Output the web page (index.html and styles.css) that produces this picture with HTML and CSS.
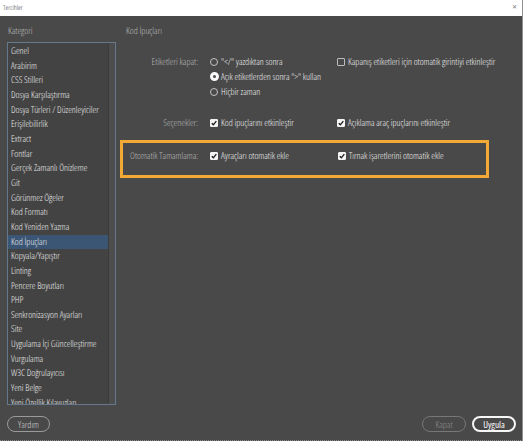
FILE: index.html
```html
<!DOCTYPE html>
<html>

<head>
  <meta charset="UTF-8">
  <title>Tercihler</title>
  <link rel="stylesheet" href="styles.css">
</head>

<body>
  <div id="window">

    <div class="titlebar">
      <span class="title">Tercihler</span>
      <span class="close">✕</span>
    </div>

    <div class="content">
      <div class="sidebar">
        <div class="heading">Kategori</div>
        <div class="list">
          <ul class="items">
            <li>Genel</li>
            <li>Arabirim</li>
            <li>CSS Stilleri</li>
            <li>Dosya Karşılaştırma</li>
            <li>Dosya Türleri / Düzenleyiciler</li>
            <li>Erişilebilirlik</li>
            <li>Extract</li>
            <li>Fontlar</li>
            <li>Gerçek Zamanlı Önizleme</li>
            <li>Git</li>
            <li>Görünmez Öğeler</li>
            <li>Kod Formatı</li>
            <li>Kod Yeniden Yazma</li>
            <li class="selected">Kod İpuçları</li>
            <li>Kopyala/Yapıştır</li>
            <li>Linting</li>
            <li>Pencere Boyutları</li>
            <li>PHP</li>
            <li>Senkronizasyon Ayarları</li>
            <li>Site</li>
            <li>Uygulama İçi Güncelleştirme</li>
            <li>Vurgulama</li>
            <li>W3C Doğrulayıcısı</li>
            <li>Yeni Belge</li>
            <li>Yeni Özellik Kılavuzları</li>
          </ul>
          <div class="scrollbar"></div>
        </div>
      </div>

      <div class="main">
        <div class="heading">Kod İpuçları</div>

        <div class="form">
          <div class="label">Etiketleri kapat:</div>
          <div class="controls">
            <div class="option"><span class="radio"></span>"&lt;/" yazdıktan sonra</div>
            <div class="option"><span class="radio on"></span>Açık etiketlerden sonra "&gt;" kullan</div>
            <div class="option"><span class="radio"></span>Hiçbir zaman</div>
          </div>
          <div class="extra">
            <div class="option"><span class="check"></span>Kapanış etiketleri için otomatik girintiyi etkinleştir</div>
          </div>

          <div class="label">Seçenekler:</div>
          <div class="controls">
            <div class="option"><span class="check on"><svg viewBox="0 0 10 10"><path d="M2.2 5.3 L4.2 7.3 L7.9 2.6" /></svg></span>Kod ipuçlarını etkinleştir</div>
          </div>
          <div class="extra">
            <div class="option"><span class="check on"><svg viewBox="0 0 10 10"><path d="M2.2 5.3 L4.2 7.3 L7.9 2.6" /></svg></span>Açıklama araç ipuçlarını etkinleştir</div>
          </div>
        </div>

        <div class="highlight">
          <div class="label">Otomatik Tamamlama:</div>
          <div class="option"><span class="check on"><svg viewBox="0 0 10 10"><path d="M2.2 5.3 L4.2 7.3 L7.9 2.6" /></svg></span>Ayraçları otomatik ekle</div>
          <div class="option"><span class="check on"><svg viewBox="0 0 10 10"><path d="M2.2 5.3 L4.2 7.3 L7.9 2.6" /></svg></span>Tırnak işaretlerini otomatik ekle</div>
        </div>
      </div>
    </div>

    <div class="footer">
      <button class="btn help">Yardım</button>
      <div class="actions">
        <button class="btn disabled">Kapat</button>
        <button class="btn primary">Uygula</button>
      </div>
    </div>

  </div>
</body>

</html>
```

FILE: styles.css
```css
body,
html {
  padding: 0;
  margin: 0;
}

body {
  font-family: "Open Sans", "Liberation Sans", sans-serif;
  font-stretch: 79%;
  font-weight: 350;
  font-size: 9.3px;
  text-rendering: geometricPrecision;
  background: #494949;
}

#window {
  width: 523px;
  height: 441px;
  box-sizing: border-box;
  background: #494949;
  border-right: 1px solid #8e8e8e;
  border-bottom: 1px dotted #8a8a8a;
  display: flex;
  flex-direction: column;
  overflow: hidden;
}

.titlebar {
  height: 16px;
  flex: none;
  background: #fff;
  display: flex;
  justify-content: space-between;
  align-items: center;
  padding: 0 5px 0 3px;
  color: #444;
  font-size: 7px;
}

.close {
  color: #777;
  font-family: "DejaVu Sans", sans-serif;
  font-size: 6px;
  margin-top: -1px;
}

.content {
  flex: 1;
  display: flex;
  min-height: 0;
}

.heading {
  height: 26px;
  box-sizing: border-box;
  padding-top: 4px;
  line-height: 22px;
  color: #bcbcbc;
}

.sidebar {
  width: 116px;
  padding-left: 7px;
  box-sizing: border-box;
  display: flex;
  flex-direction: column;
  flex: none;
}

.sidebar .heading {
  padding-left: 1px;
}

.list {
  flex: 1;
  min-height: 0;
  display: flex;
  background: #434343;
  border: 1px solid #66788c;
  overflow: hidden;
}

.items {
  list-style: none;
  margin: 0;
  padding: 1px 0 0;
  flex: 1;
}

.items li {
  height: 14.67px;
  line-height: 14.67px;
  padding-left: 3px;
  color: #ececec;
  white-space: nowrap;
}

.items li.selected {
  background: #3b5675;
}

.scrollbar {
  width: 6px;
  background: #4d4d4d;
  border-left: 1px solid #3c3c3c;
}

.main {
  flex: 1;
  padding-left: 4px;
}

.main .heading {
  padding-left: 6px;
}

.form {
  display: grid;
  grid-template-columns: 78px 139px 1fr;
  row-gap: 16px;
  margin-top: 12px;
}

.label {
  color: #b8b8b8;
  line-height: 15px;
  white-space: nowrap;
}

.form .label {
  text-align: right;
}

.controls {
  padding-left: 12px;
}

.option {
  display: flex;
  align-items: center;
  height: 15px;
  color: #efefef;
  white-space: nowrap;
}

.radio {
  width: 8px;
  height: 8px;
  box-sizing: border-box;
  border: 1px solid #c4c4c4;
  border-radius: 50%;
  margin-right: 3px;
  flex: none;
}

.radio.on {
  border: 3px solid #fafafa;
  width: 9px;
  height: 9px;
  margin-right: 2px;
}

.check {
  width: 8px;
  height: 8px;
  box-sizing: border-box;
  border: 1px solid #bdbdbd;
  border-radius: 1px;
  margin-right: 3px;
  flex: none;
  display: flex;
}

.check.on {
  background: #f4f4f4;
  border-color: #f4f4f4;
}

.check svg {
  width: 8px;
  height: 8px;
  margin: -1px;
}

.check path {
  fill: none;
  stroke: #1e1e1e;
  stroke-width: 1.7;
}

.highlight {
  width: 369px;
  box-sizing: border-box;
  margin-top: 10px;
  border: 3px solid #f2a935;
  padding: 5px 0 12px 7px;
  display: grid;
  grid-template-columns: 80px 128px 1fr;
}

.footer {
  height: 35px;
  flex: none;
  box-sizing: border-box;
  padding: 11px 6px 0 7px;
  display: flex;
  justify-content: space-between;
  align-items: flex-start;
}

.actions {
  display: flex;
  gap: 6px;
}

.btn {
  width: 44px;
  height: 16px;
  box-sizing: border-box;
  border-radius: 8px;
  background: none;
  font-family: inherit;
  font-stretch: 79%;
  font-weight: 350;
  font-size: 9.3px;
  padding: 0;
  border: 1px solid #9a9a9a;
  color: #d0d0d0;
}

.btn.help {
  width: 43px;
}

.btn.disabled {
  border-color: #777;
  color: #909090;
}

.btn.primary {
  border: 2px solid #f6f6f6;
  color: #fff;
  font-weight: 450;
}
```
